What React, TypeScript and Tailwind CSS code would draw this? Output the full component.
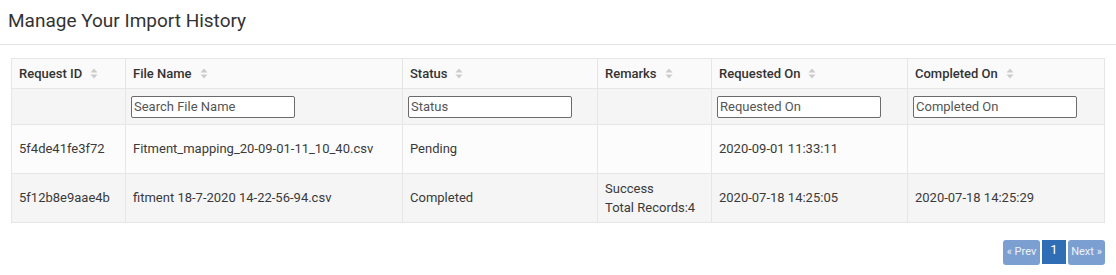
const columns = [
  { label: 'Request ID', width: 114, filter: null },
  { label: 'File Name', width: 277, filter: 'Search File Name' },
  { label: 'Status', width: 195, filter: 'Status' },
  { label: 'Remarks', width: 114, filter: null },
  { label: 'Requested On', width: 196, filter: 'Requested On' },
  { label: 'Completed On', width: 197, filter: 'Completed On' },
];

const rows = [
  {
    id: '5f4de41fe3f72',
    file: 'Fitment_mapping_20-09-01-11_10_40.csv',
    status: 'Pending',
    remarks: [] as string[],
    requested: '2020-09-01 11:33:11',
    completed: '',
  },
  {
    id: '5f12b8e9aae4b',
    file: 'fitment 18-7-2020 14-22-56-94.csv',
    status: 'Completed',
    remarks: ['Success', 'Total Records:4'],
    requested: '2020-07-18 14:25:05',
    completed: '2020-07-18 14:25:29',
  },
];

const SortIcon = () => (
  <svg width="8" height="11" viewBox="0 0 8 11" className="ml-2 inline-block align-[-1px]">
    <path d="M4 0.5 L7.5 4.5 H0.5 Z" fill="#cccccc" />
    <path d="M4 10.5 L7.5 6.5 H0.5 Z" fill="#cccccc" />
  </svg>
);

export default function App() {
  return (
    <div className="w-[1116px] h-[275px] bg-white text-[#333] font-['Roboto',sans-serif]">
      <div className="h-[45px] border-b border-[#e3e3e3] pl-[8px] pt-[9px]">
        <h1 className="text-[19px] leading-[24px] text-[#333]">Manage Your Import History</h1>
      </div>
      <div className="pl-[11px] pr-[11px] pt-[13px]">
        <table className="table-fixed border-collapse text-[13px] w-[1094px]">
          <colgroup>
            {columns.map((c) => (
              <col key={c.label} style={{ width: c.width }} />
            ))}
          </colgroup>
          <thead>
            <tr className="h-[30px] bg-[#fafafa]">
              {columns.map((c) => (
                <th key={c.label} className="border border-[#e6e6e6] px-[7px] text-left font-medium">
                  {c.label}
                  <SortIcon />
                </th>
              ))}
            </tr>
            <tr className="h-[36px] bg-[#f5f5f5]">
              {columns.map((c) => (
                <th key={c.label} className="border border-[#e6e6e6] px-[5px] text-left font-normal">
                  {c.filter && (
                    <input
                      placeholder={c.filter}
                      className="w-[164px] h-[22px] border border-[#6b6b6b] rounded-[2px] bg-white px-[2px] text-[13px] placeholder-[#555] outline-none"
                    />
                  )}
                </th>
              ))}
            </tr>
          </thead>
          <tbody className="text-[#3a3a3a]">
            {rows.map((r, i) => (
              <tr key={r.id} className={i % 2 === 0 ? 'h-[49px] bg-[#fcfcfc]' : 'h-[49px] bg-[#f5f5f5]'}>
                <td className="border border-[#e6e6e6] px-[7px]">{r.id}</td>
                <td className="border border-[#e6e6e6] px-[7px]">{r.file}</td>
                <td className="border border-[#e6e6e6] px-[7px]">{r.status}</td>
                <td className="border border-[#e6e6e6] px-[7px] leading-[19px]">
                  {r.remarks.map((line) => (
                    <div key={line}>{line}</div>
                  ))}
                </td>
                <td className="border border-[#e6e6e6] px-[7px]">{r.requested}</td>
                <td className="border border-[#e6e6e6] px-[7px]">{r.completed}</td>
              </tr>
            ))}
          </tbody>
        </table>
        <div className="flex justify-end gap-[2px] pt-[17px] text-[11px]">
          <button className="h-[25px] w-[37px] rounded-[3px] bg-[#7b9fd1] text-[#eef3fa]">« Prev</button>
          <button className="h-[24px] w-[24px] bg-[#2f6db5] text-[13px] text-white leading-[18px] pb-[4px]">1</button>
          <button className="h-[25px] w-[37px] rounded-[3px] bg-[#7b9fd1] text-[#eef3fa]">Next »</button>
        </div>
      </div>
    </div>
  );
}
